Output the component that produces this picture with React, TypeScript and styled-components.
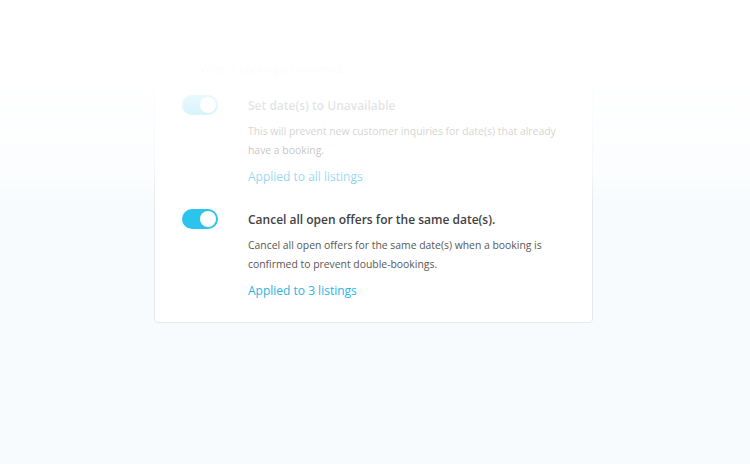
import { useState } from "react";
import { styled, createGlobalStyle } from "styled-components";

const GlobalStyle = createGlobalStyle`
  body {
    margin: 0;
    font-family: "Open Sans", "Liberation Sans", sans-serif;
  }
`;

const Page = styled.div`
  position: relative;
  min-height: 464px;
  background-color: #f7fbfd;
  padding-top: 50px;
  box-sizing: border-box;
  overflow: hidden;
`;

const Fade = styled.div`
  position: absolute;
  left: 0;
  right: 0;
  top: 0;
  height: 205px;
  pointer-events: none;
  background: linear-gradient(
    to bottom,
    #ffffff 0px,
    #ffffff 45px,
    rgba(255, 255, 255, 0.97) 75px,
    rgba(255, 255, 255, 0.86) 105px,
    rgba(255, 255, 255, 0.55) 175px,
    rgba(255, 255, 255, 0) 205px
  );
`;

const Card = styled.div`
  width: 439px;
  margin-left: 154px;
  box-sizing: border-box;
  background-color: #fff;
  border: 1px solid #e4e9ed;
  border-radius: 4px;
  padding: 9px 27px 22px;
  display: flex;
  flex-direction: column;
  gap: 25px;
`;

const Header = styled.p`
  margin: 0 0 -7px 18px;
  font-size: 10.4px;
  line-height: 19px;
  color: #777;
`;

const Item = styled.div`
  display: flex;
  gap: 30px;
  align-items: flex-start;
`;

const Track = styled.button<{ $on: boolean }>`
  flex: none;
  width: 36px;
  height: 20px;
  margin-top: -2px;
  padding: 2px;
  border: 0;
  border-radius: 10px;
  background-color: ${(p) => (p.$on ? "#2cc3ed" : "#cfd8dc")};
  display: flex;
  justify-content: ${(p) => (p.$on ? "flex-end" : "flex-start")};
  align-items: center;
  cursor: pointer;
`;

const Knob = styled.span`
  width: 16px;
  height: 16px;
  border-radius: 50%;
  background-color: #fff;
`;

const Body = styled.div`
  display: flex;
  flex-direction: column;
  flex: 1;
`;

const Title = styled.div`
  font-size: 12px;
  line-height: 18px;
  font-weight: 600;
  color: #424242;
`;

const Desc = styled.p`
  margin: 7px 0 0;
  font-size: 10.4px;
  line-height: 19px;
  color: #575757;
`;

const Applied = styled.a`
  margin-top: 8px;
  font-size: 12px;
  line-height: 18px;
  color: #2bb4e7;
  text-decoration: none;
  cursor: pointer;
`;

const settings = [
  {
    id: "unavailable",
    title: "Set date(s) to Unavailable",
    desc: "This will prevent new customer inquiries for date(s) that already have a booking.",
    applied: "Applied to all listings",
  },
  {
    id: "cancel",
    title: "Cancel all open offers for the same date(s).",
    desc: "Cancel all open offers for the same date(s) when a booking is confirmed to prevent double-bookings.",
    applied: "Applied to 3 listings",
  },
];

export default function App() {
  const [on, setOn] = useState<Record<string, boolean>>({
    unavailable: true,
    cancel: true,
  });

  return (
    <Page>
      <GlobalStyle />
      <Card>
        <Header>When a booking is confirmed:</Header>
        {settings.map((s) => (
          <Item key={s.id}>
            <Track
              $on={on[s.id]}
              onClick={() => setOn({ ...on, [s.id]: !on[s.id] })}
            >
              <Knob />
            </Track>
            <Body>
              <Title>{s.title}</Title>
              <Desc>{s.desc}</Desc>
              <Applied>{s.applied}</Applied>
            </Body>
          </Item>
        ))}
      </Card>
      <Fade />
    </Page>
  );
}
